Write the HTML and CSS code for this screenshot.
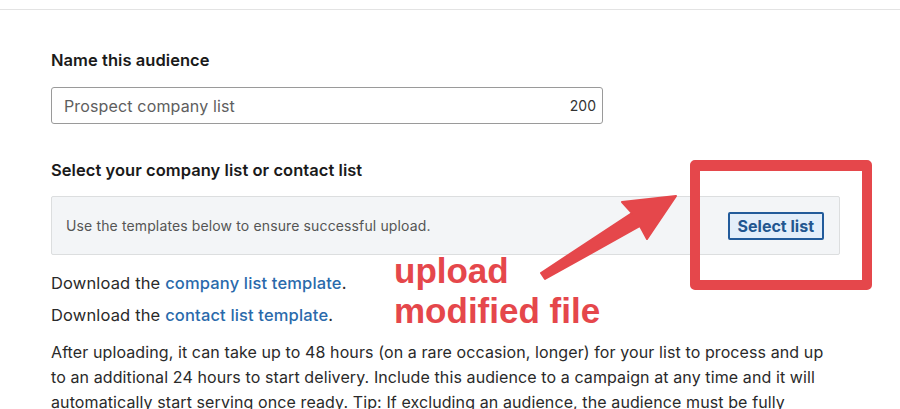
FILE: index.html
```html
<!DOCTYPE html>
<html lang="en">
<head>
<meta charset="utf-8">
<title>Name this audience</title>
<link rel="stylesheet" href="styles.css">
</head>
<body>
<div class="topbar"></div>
<main class="form">
  <section class="field">
    <label class="label" for="aud">Name this audience</label>
    <div class="input">
      <span class="value" id="aud">Prospect company list</span>
      <span class="count">200</span>
    </div>
  </section>
  <section class="field field-list">
    <h2 class="label">Select your company list or contact list</h2>
    <div class="upload">
      <span class="hint">Use the templates below to ensure successful upload.</span>
      <button class="btn" type="button">Select list</button>
    </div>
    <p class="download">Download the <a href="#" class="link">company list template</a>.</p>
    <p class="download download-2">Download the <a href="#" class="link">contact list template</a>.</p>
    <p class="note">After uploading, it can take up to 48 hours (on a rare occasion, longer) for your list to process and up to an additional 24 hours to start delivery. Include this audience to a campaign at any time and it will automatically start serving once ready. Tip: If excluding an audience, the audience must be fully processed before the campaign launches.</p>
  </section>
</main>

<div class="callout-box"></div>
<svg class="callout-arrow" width="900" height="409" viewBox="0 0 900 409" aria-hidden="true">
  <polygon points="676,196 622,202 632,213 541,273 545,279 640,226 647,239" fill="#e5474b" stroke="#e5474b" stroke-width="2" stroke-linejoin="round"/>
</svg>
<div class="callout-text">upload<br>modified file</div>
</body>
</html>
```
FILE: styles.css
```css
* { box-sizing: border-box; }
html, body { margin: 0; padding: 0; background: #fff; }
body {
  font-family: Inter, "Liberation Sans", Arial, sans-serif;
  color: #222;
  overflow: hidden;
  height: 409px;
}
.topbar {
  height: 10px;
  border-bottom: 1px solid #e3e3e3;
}
.form {
  padding: 39px 0 0 51px;
  width: 845px;
}
.field { display: flex; flex-direction: column; align-items: flex-start; }
.label {
  display: block;
  margin: 0;
  font-size: 16.5px;
  letter-spacing: 0.05px;
  font-weight: 600;
  line-height: 22px;
  color: #1a1a1a;
}
.input {
  margin-top: 16px;
  width: 552px;
  height: 37px;
  border: 1px solid #9a9a9a;
  border-radius: 3px;
  display: flex;
  align-items: center;
  justify-content: space-between;
  padding: 0 6px 0 12px;
}
.value { font-size: 16px; letter-spacing: 0.15px; color: #5e5e5e; }
.count { font-size: 14px; color: #333; }
.field-list { margin-top: 35px; }
.upload {
  margin-top: 15px;
  width: 789px;
  height: 59px;
  background: #f3f5f7;
  border: 1px solid #dcdedf;
  border-radius: 2px;
  display: flex;
  align-items: center;
  justify-content: space-between;
  padding: 0 15px 0 14px;
}
.hint { font-size: 14px; letter-spacing: 0.13px; color: #555; }
.btn {
  font-family: inherit;
  height: 28px;
  padding: 0 8px;
  border: 2px solid #225b9b;
  border-radius: 2px;
  background: #e3eefa;
  color: #225690;
  font-size: 16px;
  font-weight: 700;
}
.download {
  margin: 16px 0 0;
  font-size: 16.5px;
  letter-spacing: 0.15px;
  line-height: 24px;
  color: #2a2a2a;
}
.download-2 { margin-top: 8px; }
.link { color: #2a6aab; text-decoration: none; font-weight: 500; }
.note {
  margin: 13px 0 0;
  width: 790px;
  font-size: 16px;
  letter-spacing: 0.1px;
  line-height: 25px;
  color: #2a2a2a;
}
.callout-box {
  position: absolute;
  left: 690px;
  top: 160px;
  width: 182px;
  height: 130px;
  border: 10px solid #e5474b;
  border-top-width: 11px;
  border-radius: 5px;
}
.callout-arrow {
  position: absolute;
  left: 0;
  top: 0;
}
.callout-text {
  position: absolute;
  left: 394px;
  top: 251px;
  font-family: "Liberation Sans", Arial, sans-serif;
  font-size: 35px;
  font-weight: 700;
  line-height: 40px;
  color: #e5474b;
}
```
